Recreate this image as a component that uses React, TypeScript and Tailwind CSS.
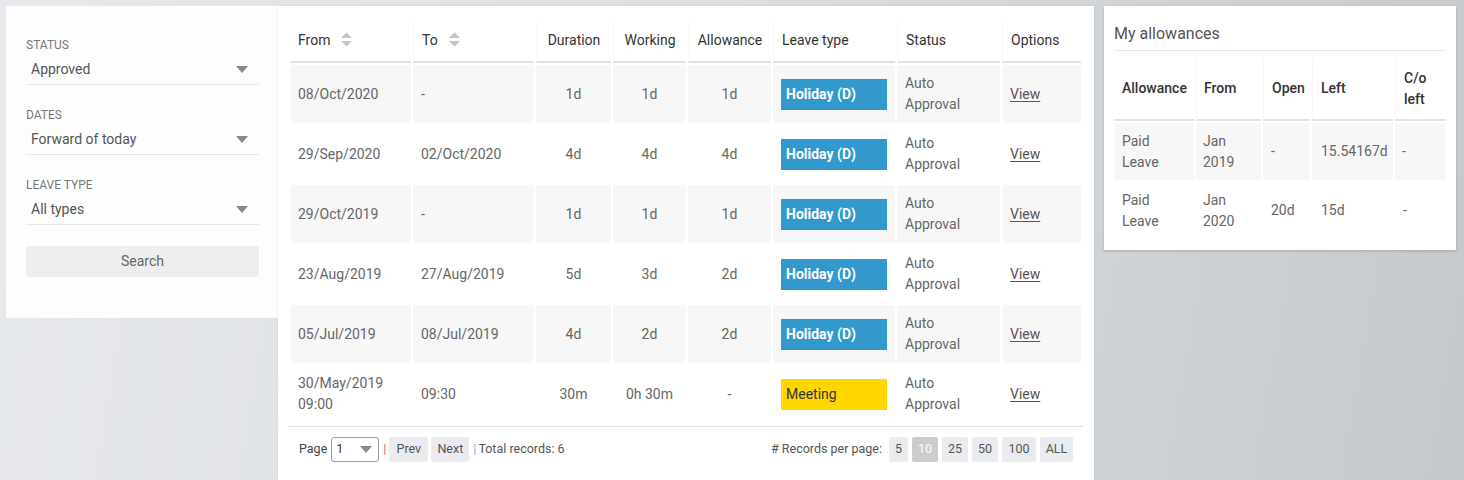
import React from "react";

const font = { fontFamily: "Roboto, 'Noto Sans', Arial, sans-serif" };

function SortIcon() {
  return (
    <svg width="11" height="15" viewBox="0 0 11 15" className="inline-block ml-[11px] -mt-[4px] align-middle">
      <polygon points="0,6 5.5,0.5 11,6" fill="#c4c4c4" />
      <polygon points="0,9 11,9 5.5,14.5" fill="#c4c4c4" />
    </svg>
  );
}

function Caret({ className = "" }: { className?: string }) {
  return (
    <svg width="12" height="7" viewBox="0 0 12 7" className={className}>
      <polygon points="0,0 12,0 6,7" fill="#8a8a8a" />
    </svg>
  );
}

function Field({ label, value, first }: { label: string; value: string; first?: boolean }) {
  return (
    <div className={first ? "" : "mt-[22px]"}>
      <div className="text-[12px] leading-[16px] text-[#777] uppercase">{label}</div>
      <div className="mt-[6px] flex items-center justify-between pl-[5px] pr-[11px] pb-[5px] border-b border-[#e8e8e8]">
        <span className="text-[14px] leading-[20px] text-[#555]">{value}</span>
        <Caret />
      </div>
    </div>
  );
}

type Row = {
  from: string[];
  to: string;
  dur: string;
  work: string;
  allow: string;
  type: "holiday" | "meeting";
};

const rows: Row[] = [
  { from: ["08/Oct/2020"], to: "-", dur: "1d", work: "1d", allow: "1d", type: "holiday" },
  { from: ["29/Sep/2020"], to: "02/Oct/2020", dur: "4d", work: "4d", allow: "4d", type: "holiday" },
  { from: ["29/Oct/2019"], to: "-", dur: "1d", work: "1d", allow: "1d", type: "holiday" },
  { from: ["23/Aug/2019"], to: "27/Aug/2019", dur: "5d", work: "3d", allow: "2d", type: "holiday" },
  { from: ["05/Jul/2019"], to: "08/Jul/2019", dur: "4d", work: "2d", allow: "2d", type: "holiday" },
  { from: ["30/May/2019", "09:00"], to: "09:30", dur: "30m", work: "0h 30m", allow: "-", type: "meeting" },
];

const th = "h-[43px] border-b-2 border-[#e2e2e2] border-l border-l-[#f8f8f8] text-[14px] font-normal text-[#333] align-middle";

export default function App() {
  return (
    <div
      style={font}
      className="h-[480px] w-[1464px] overflow-hidden bg-[linear-gradient(100deg,#e7e9ec_0%,#dcdfe2_45%,#c5c9cc_100%)]"
    >
      <div className="flex items-start pt-[6px] pl-[6px]">
        {/* Left filter panel */}
        <div className="w-[272px] h-[312px] bg-[#fdfdfd] pl-[20px] pr-[19px] pt-[31px]">
          <Field label="Status" value="Approved" first />
          <Field label="Dates" value="Forward of today" />
          <Field label="Leave type" value="All types" />
          <button className="mt-[21px] w-full h-[31px] rounded-[2px] bg-[#eeeeee] text-[14px] text-[#666]">
            Search
          </button>
        </div>

        {/* Main panel */}
        <div className="w-[816px] h-[480px] bg-white pl-[10px] pr-[11px] pt-[12px] shadow-[0_0_2px_rgba(0,0,0,0.08)]">
          <table className="table-fixed border-separate border-spacing-[2px] w-[795px]">
            <colgroup>
              <col className="w-[121px]" />
              <col className="w-[121px]" />
              <col className="w-[75px]" />
              <col className="w-[73px]" />
              <col className="w-[83px]" />
              <col className="w-[122px]" />
              <col className="w-[103px]" />
              <col className="w-[79px]" />
            </colgroup>
            <thead>
              <tr>
                <th className={th + " text-left pl-[8px] border-l-0"}>
                  From
                  <SortIcon />
                </th>
                <th className={th + " text-left pl-[8px]"}>
                  To
                  <SortIcon />
                </th>
                <th className={th + " text-center"}>Duration</th>
                <th className={th + " text-center"}>Working</th>
                <th className={th + " text-center"}>Allowance</th>
                <th className={th + " text-left pl-[8px]"}>Leave type</th>
                <th className={th + " text-left pl-[8px]"}>Status</th>
                <th className={th + " text-left pl-[8px]"}>Options</th>
              </tr>
            </thead>
            <tbody>
              {rows.map((r, i) => (
                <tr key={i} className={i % 2 === 0 ? "bg-[#f7f7f7]" : "bg-white"}>
                  <td className="h-[58px] pl-[8px] text-[14px] leading-[21px] text-[#666]">
                    {r.from.map((f, j) => (
                      <div key={j}>{f}</div>
                    ))}
                  </td>
                  <td className="pl-[8px] text-[14px] text-[#666]">{r.to}</td>
                  <td className="text-center text-[14px] text-[#666]">{r.dur}</td>
                  <td className="text-center text-[14px] text-[#666]">{r.work}</td>
                  <td className="text-center text-[14px] text-[#666]">{r.allow}</td>
                  <td className="pl-[8px]">
                    {r.type === "holiday" ? (
                      <div className="w-[106px] h-[31px] bg-[#3399cc] text-white font-bold text-[14px] leading-[31px] pl-[5px]">
                        Holiday (D)
                      </div>
                    ) : (
                      <div className="w-[106px] h-[31px] bg-[#ffd600] text-[#333] text-[14px] leading-[31px] pl-[5px]">
                        Meeting
                      </div>
                    )}
                  </td>
                  <td className="pl-[8px] text-[14px] leading-[21px] text-[#666]">
                    <div>Auto</div>
                    <div>Approval</div>
                  </td>
                  <td className="pl-[8px] text-[14px] text-[#555]">
                    <span className="underline underline-offset-[2px]">View</span>
                  </td>
                </tr>
              ))}
            </tbody>
          </table>

          {/* Pagination */}
          <div className="mt-[1px] border-t border-[#dddddd] flex items-center justify-between pt-[10px] pl-[11px] pr-[10px] text-[12.5px] text-[#444]">
            <div className="flex items-center">
              <span>Page</span>
              <div className="ml-[4px] w-[48px] h-[25px] border border-[#999] rounded-[3px] flex items-center justify-between pl-[4px] pr-[6px]">
                <span className="text-[#333]">1</span>
                <Caret />
              </div>
              <span className="ml-[4px] text-[#c07070]">|</span>
              <button className="ml-[3px] h-[25px] w-[39px] rounded-[2px] bg-[#e9ebee] text-[#555]">Prev</button>
              <button className="ml-[3px] h-[25px] w-[38px] rounded-[2px] bg-[#e9ebee] text-[#555]">Next</button>
              <span className="ml-[4px] text-[#7ab3e0]">|</span>
              <span className="ml-[2px] text-[#555]">Total records: 6</span>
            </div>
            <div className="flex items-center gap-[4px]">
              <span className="mr-[3px] text-[#555]"># Records per page:</span>
              <button className="h-[25px] w-[19px] rounded-[2px] bg-[#e9ebee] text-[#555]">5</button>
              <button className="h-[25px] w-[26px] rounded-[2px] bg-[#cccccc] text-white">10</button>
              <button className="h-[25px] w-[26px] rounded-[2px] bg-[#e9ebee] text-[#555]">25</button>
              <button className="h-[25px] w-[26px] rounded-[2px] bg-[#e9ebee] text-[#555]">50</button>
              <button className="h-[25px] w-[34px] rounded-[2px] bg-[#e9ebee] text-[#555]">100</button>
              <button className="h-[25px] w-[33px] rounded-[2px] bg-[#e9ebee] text-[#555]">ALL</button>
            </div>
          </div>
        </div>

        {/* Right panel */}
        <div className="ml-[10px] w-[352px] h-[244px] bg-white shadow-[0_1px_3px_rgba(0,0,0,0.18)] px-[10px] pt-[18px]">
          <div className="text-[16px] leading-[20px] text-[#555] pb-[6px] border-b border-[#e6e6e6]">My allowances</div>
          <table className="table-fixed border-separate border-spacing-[2px] w-[336px] -ml-[2px] mt-[5px]">
            <colgroup>
              <col className="w-[80px]" />
              <col className="w-[65px]" />
              <col className="w-[47px]" />
              <col className="w-[81px]" />
              <col className="w-[51px]" />
            </colgroup>
            <thead>
              <tr>
                <th className="h-[63px] border-b-2 border-[#e2e2e2] text-left pl-[8px] text-[14px] font-medium text-[#333]">Allowance</th>
                <th className="border-b-2 border-[#e2e2e2] border-l border-l-[#f6f6f6] text-left pl-[7px] text-[14px] font-medium text-[#333]">From</th>
                <th className="border-b-2 border-[#e2e2e2] border-l border-l-[#f6f6f6] text-left pl-[8px] text-[14px] font-medium text-[#333]">Open</th>
                <th className="border-b-2 border-[#e2e2e2] border-l border-l-[#f6f6f6] text-left pl-[8px] text-[14px] font-medium text-[#333]">Left</th>
                <th className="border-b-2 border-[#e2e2e2] border-l border-l-[#f6f6f6] text-left pl-[8px] text-[14px] font-medium text-[#333] leading-[21px]">
                  C/o
                  <br />
                  left
                </th>
              </tr>
            </thead>
            <tbody>
              <tr className="bg-[#f7f7f7]">
                <td className="h-[57px] pl-[8px] text-[14px] leading-[21px] text-[#666]">
                  <div>Paid</div>
                  <div>Leave</div>
                </td>
                <td className="pl-[7px] text-[14px] leading-[21px] text-[#666]">
                  <div>Jan</div>
                  <div>2019</div>
                </td>
                <td className="pl-[8px] text-[14px] text-[#666]">-</td>
                <td className="pl-[9px] text-[14px] text-[#666]">15.54167d</td>
                <td className="pl-[7px] text-[14px] text-[#666]">-</td>
              </tr>
              <tr className="bg-white">
                <td className="h-[57px] pl-[8px] text-[14px] leading-[21px] text-[#666]">
                  <div>Paid</div>
                  <div>Leave</div>
                </td>
                <td className="pl-[7px] text-[14px] leading-[21px] text-[#666]">
                  <div>Jan</div>
                  <div>2020</div>
                </td>
                <td className="pl-[8px] text-[14px] text-[#666]">20d</td>
                <td className="pl-[9px] text-[14px] text-[#666]">15d</td>
                <td className="pl-[8px] text-[14px] text-[#666]">-</td>
              </tr>
            </tbody>
          </table>
        </div>
      </div>
    </div>
  );
}
